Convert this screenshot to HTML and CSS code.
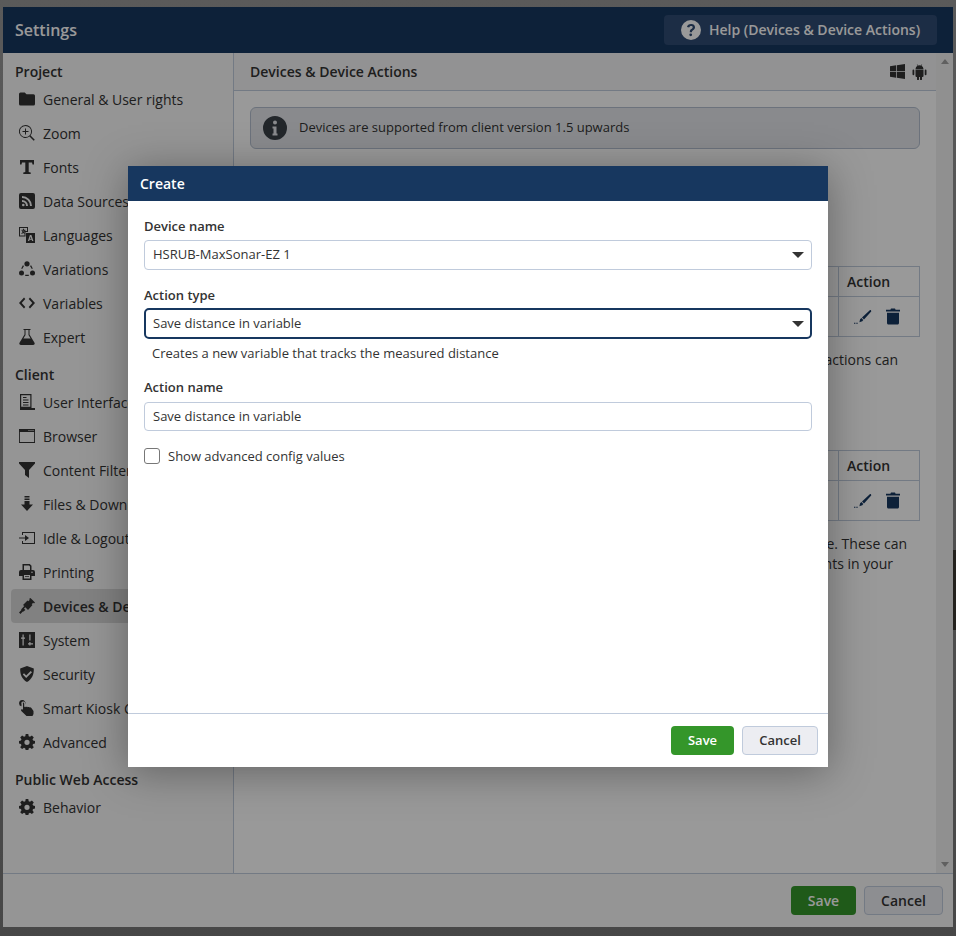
FILE: index.html
```html
<!DOCTYPE html>
<html lang="en">
<head>
<meta charset="utf-8">
<title>Settings</title>
<link rel="stylesheet" href="styles.css">
</head>
<body>
<svg class="defs" width="0" height="0">
  <symbol id="i-folder" viewBox="0 0 16 16"><path d="M1.500 1.500h4.200l1.800 1.800h7A1.500 1.500 0 0 1 16 4.800v8.200a1.500 1.500 0 0 1-1.500 1.500h-13A1.500 1.500 0 0 1 0 13V3a1.500 1.500 0 0 1 1.500-1.500z"/></symbol>
  <symbol id="i-zoom" viewBox="0 0 16 16"><path fill-rule="evenodd" d="M6.500 0a6.500 6.500 0 0 1 5.100 10.500l4.200 4.200-1.100 1.100-4.200-4.200A6.500 6.500 0 1 1 6.500 0zm0 .9a5.600 5.600 0 1 0 0 11.200A5.600 5.600 0 0 0 6.500.9zM6 3.500h1V6h2.500v1H7v2.500H6V7H3.500V6H6z"/></symbol>
  <symbol id="i-font" viewBox="0 0 16 16"><path d="M1 1h14v4.500h-1.500L13 3.500H9.700v9.500l2 .5V15H4.300v-1.500l2-.5V3.500H3l-.5 2H1z"/></symbol>
  <symbol id="i-rss" viewBox="0 0 16 16"><path fill-rule="evenodd" d="M2 0h12a2 2 0 0 1 2 2v12a2 2 0 0 1-2 2H2a2 2 0 0 1-2-2V2a2 2 0 0 1 2-2zm1 3v2a8 8 0 0 1 8 8h2A10 10 0 0 0 3 3zm0 4v2a4 4 0 0 1 4 4h2a6 6 0 0 0-6-6zm1.300 3.700a1.300 1.300 0 1 0 0 2.600 1.300 1.300 0 0 0 0-2.600z"/></symbol>
  <symbol id="i-lang" viewBox="0 0 16 16"><path fill-rule="evenodd" d="M0 0h9v5H6.500v4.500H0zm1 1v7.500h4.500V4H8V1zm3 .8h1v1h1.500v1h-.7a5 5 0 0 1-.9 1.600l.9.700-.6.700-1-.8-1.400 1-.5-.8 1.300-.9a5 5 0 0 1-.7-1.200h1a4 4 0 0 0 .4.600 4 4 0 0 0 .5-1H2.500v-1H4zM7 6h9v10H7zm3.900 2-2 6h1.300l.4-1.200h2.100l.4 1.200h1.300l-2-6zm.7 1.700.7 2h-1.400z"/></symbol>
  <symbol id="i-vari" viewBox="0 0 16 16"><circle cx="8" cy="2.800" r="2.600"/><circle cx="2.500" cy="12" r="2.500"/><circle cx="13.500" cy="12" r="2.500"/><path d="M3.900 4.300 2.200 7.400l1 .5 1.800-3zm8.200 0-1.100.6 1.800 3 1-.5zM6.200 13.800v1.300h3.600v-1.300z"/></symbol>
  <symbol id="i-code" viewBox="0 0 16 16"><path d="M5 2.500 6.300 4 2.700 8l3.600 4L5 13.500 0 8zm6 0L16 8l-5 5.500L9.700 12l3.600-4-3.600-4z"/></symbol>
  <symbol id="i-flask" viewBox="0 0 16 16"><path fill-rule="evenodd" d="M4.500 0h7v1h-1v4.500l5 8.300c.6 1-.1 2.200-1.300 2.200H1.800C.6 16-.1 14.800.5 13.800l5-8.300V1h-1zm2 1v4.900L4.400 9.500h7.200L9.500 5.900V1z"/></symbol>
  <symbol id="i-book" viewBox="0 0 16 16"><path fill-rule="evenodd" d="M1 0h11.500v14H16v2H1zm1.200 1.200v11.600h9.100V1.200zM4 3h3.500v1H4zm0 2.500h5.500v1H4zM4 8h5.500v1H4zm0 2.500h5.500v1H4z"/></symbol>
  <symbol id="i-browser" viewBox="0 0 16 16"><path fill-rule="evenodd" d="M0 1h16v14H0zm.9 3v10.100h14.200V4zM9.500 2v1h1V2zm2 0v1h1V2zm2 0v1h1V2z"/></symbol>
  <symbol id="i-filter" viewBox="0 0 16 16"><path d="M0 0h16v1.500L10 8v8L6 13V8L0 1.500z"/></symbol>
  <symbol id="i-down" viewBox="0 0 16 16"><path d="M5.500 0h5v1.500h-5zm0 2.500h5V4h-5zm0 2.500h5v3.500H14L8 15 2 8.500h3.500z"/></symbol>
  <symbol id="i-logout" viewBox="0 0 16 16"><path fill-rule="evenodd" d="M3 2h13v12H3v-3h1v2h11V3H4v2H3zM0 7.500h6V5l4 3-4 3V8.500H0z"/></symbol>
  <symbol id="i-print" viewBox="0 0 16 16"><path fill-rule="evenodd" d="M3.500 0h7.300l1.700 1.700V6H14a2 2 0 0 1 2 2v4h-3.500v4h-9v-4H0V8a2 2 0 0 1 2-2h1.500zM5 1.500V6h6V2.500l-1-1zM5 11v3.500h6V11zm1 1h4v.8H6zm7-4.500a.8.800 0 1 0 0 1.600.8.800 0 0 0 0-1.600z"/></symbol>
  <symbol id="i-plug" viewBox="0 0 16 16"><path d="M11.500 0 16 4.500 15 5.500l-.8-.8-1.500 1.500.8.800L9 12 6.300 9.300 5 10.600l1.400 1.400-1.900 1.600-1 .1L1.500 16 0 14.500l2.200-2.200.1-1 3-3.200L4 7l4.500-4.500.8.800L10.800 1.800 10 1z"/></symbol>
  <symbol id="i-sys" viewBox="0 0 16 16"><path fill-rule="evenodd" d="M0 0h16v16H0zm3.500 2.500v3H2v1.200h1.500v6.800h1.200V6.700H6V5.500H4.700v-3zm6.800 7.500v1.200H9v1.200h1.300v1.100h1.200v-1.100H14v-1.200h-2.500V10zm0-7.500v6h1.200v-6z"/></symbol>
  <symbol id="i-shield" viewBox="0 0 16 16"><path fill-rule="evenodd" d="M8 0l6.800 2.500c.2 6-1.800 10.800-6.800 13.500C3 13.300 1 8.500 1.200 2.500zm3.700 5L7.200 9.500 5 7.300 3.800 8.500l3.400 3.400L13 6.200z"/></symbol>
  <symbol id="i-hand" viewBox="0 0 16 16"><path fill-rule="evenodd" d="M3.200 0a3.200 3.200 0 0 1 3 4.400V3.400a1.900 1.900 0 1 0-3.700.6v2.300A3.200 3.200 0 0 1 3.200 0zM4 2.500a1.200 1.200 0 0 1 1.200 1.200v3.500c.5-.5 1.300-.5 1.700 0 .5-.5 1.400-.5 1.800.1.500-.4 1.300-.4 1.700.2.700-.4 1.600-.1 2 .6l2.100 3V14l-1 2H7.500L2.300 11c-.8-1 .4-2.300 1.400-1.400l.3.300V3.700A1.200 1.200 0 0 1 4 2.500z"/></symbol>
  <symbol id="i-cog" viewBox="0 0 16 16"><path fill-rule="evenodd" d="M6.700 0h2.600l.4 2.200 1.300.6 1.900-1.300 1.900 1.900-1.300 1.900.6 1.300 1.900.4v2.600l-1.900.4-.6 1.300 1.300 1.900-1.900 1.900-1.900-1.300-1.300.6-.4 2.200H6.700l-.4-2.200-1.300-.6-1.900 1.300-1.900-1.900 1.300-1.900-.6-1.300L0 9.600V7l1.900-.4.600-1.300L1.200 3.400l1.900-1.900 1.900 1.300 1.300-.6zM8 5.700a2.600 2.600 0 1 0 0 5.200 2.600 2.600 0 0 0 0-5.200z"/></symbol>
  <symbol id="i-pen" viewBox="0 0 18 14"><path d="M15.800.2c.7-.4 1.700.6 1.400 1.300L10 9.500 8 7.500zM7.400 8.100l1.900 1.900-1 1.300-2.900 1 .7-3zM0 12.800h1.400v1H0zm2.300 0h1.400v1H2.300z"/></symbol>
  <symbol id="i-trash" viewBox="0 0 14 16"><path fill-rule="evenodd" d="M5 0h4l.6 1.200H14v1.900H0V1.200h4.400zM1 4.200h12v10.300c0 .9-.6 1.500-1.500 1.500h-9C1.600 16 1 15.400 1 14.500z"/></symbol>
</svg>

<div class="window">
  <header class="win-head">
    <h1 class="win-title">Settings</h1>
    <button class="help-btn">
      <svg class="help-icon" viewBox="0 0 20 20"><path fill-rule="evenodd" d="M10 0a10 10 0 1 1 0 20 10 10 0 0 1 0-20zm.2 4C7.800 4 6.300 5 6 7l2.200.6c.2-1 .8-1.600 1.900-1.600 1 0 1.600.5 1.600 1.300 0 .8-.6 1.200-1.400 1.800-1 .7-1.500 1.400-1.500 2.600v.5h2.200v-.3c0-.7.300-1 1.100-1.600 1-.7 1.900-1.500 1.900-3C14 5.200 12.500 4 10.200 4zM9.700 13.400a1.400 1.400 0 1 0 0 2.800 1.400 1.400 0 0 0 0-2.800z"/></svg>
      <span class="help-text">Help (Devices &amp; Device Actions)</span>
    </button>
  </header>

  <div class="win-body">
    <nav class="sidebar">
      <div class="nav-section">Project</div>
      <a class="nav-item"><svg class="nav-icon"><use href="#i-folder"/></svg><span>General &amp; User rights</span></a>
      <a class="nav-item"><svg class="nav-icon"><use href="#i-zoom"/></svg><span>Zoom</span></a>
      <a class="nav-item"><svg class="nav-icon"><use href="#i-font"/></svg><span>Fonts</span></a>
      <a class="nav-item"><svg class="nav-icon"><use href="#i-rss"/></svg><span>Data Sources</span></a>
      <a class="nav-item"><svg class="nav-icon"><use href="#i-lang"/></svg><span>Languages</span></a>
      <a class="nav-item"><svg class="nav-icon"><use href="#i-vari"/></svg><span>Variations</span></a>
      <a class="nav-item"><svg class="nav-icon"><use href="#i-code"/></svg><span>Variables</span></a>
      <a class="nav-item"><svg class="nav-icon"><use href="#i-flask"/></svg><span>Expert</span></a>
      <div class="nav-section">Client</div>
      <a class="nav-item"><svg class="nav-icon"><use href="#i-book"/></svg><span>User Interface</span></a>
      <a class="nav-item"><svg class="nav-icon"><use href="#i-browser"/></svg><span>Browser</span></a>
      <a class="nav-item"><svg class="nav-icon"><use href="#i-filter"/></svg><span>Content Filter</span></a>
      <a class="nav-item"><svg class="nav-icon"><use href="#i-down"/></svg><span>Files &amp; Downloads</span></a>
      <a class="nav-item"><svg class="nav-icon"><use href="#i-logout"/></svg><span>Idle &amp; Logout</span></a>
      <a class="nav-item"><svg class="nav-icon"><use href="#i-print"/></svg><span>Printing</span></a>
      <a class="nav-item active"><svg class="nav-icon"><use href="#i-plug"/></svg><span>Devices &amp; Device Actions</span></a>
      <a class="nav-item"><svg class="nav-icon"><use href="#i-sys"/></svg><span>System</span></a>
      <a class="nav-item"><svg class="nav-icon"><use href="#i-shield"/></svg><span>Security</span></a>
      <a class="nav-item"><svg class="nav-icon"><use href="#i-hand"/></svg><span>Smart Kiosk Control</span></a>
      <a class="nav-item"><svg class="nav-icon"><use href="#i-cog"/></svg><span>Advanced</span></a>
      <div class="nav-section">Public Web Access</div>
      <a class="nav-item"><svg class="nav-icon"><use href="#i-cog"/></svg><span>Behavior</span></a>
    </nav>

    <main class="content">
      <div class="content-title">
        <h2 class="content-h">Devices &amp; Device Actions</h2>
        <div class="os-icons">
          <svg class="os-win" viewBox="0 0 14 14"><path d="M0 2l5.700-.8v5.400H0zm6.400-.9L14 0v6.600H6.400zM0 7.300h5.700v5.500L0 12zm6.400 0H14V14l-7.600-1.100z"/></svg>
          <svg class="os-droid" viewBox="0 0 14 16"><path d="M3 5.500h8V12a1 1 0 0 1-1 1h-.5v2.200a1 1 0 0 1-2 0V13h-1v2.200a1 1 0 0 1-2 0V13H4a1 1 0 0 1-1-1zM.9 5.500a.9.900 0 0 1 .9.900v3.900a.9.900 0 0 1-1.800 0V6.400a.9.900 0 0 1 .9-.9zm12.200 0a.9.900 0 0 1 .9.900v3.900a.9.900 0 0 1-1.800 0V6.400a.9.900 0 0 1 .9-.9zM3 5a4 4 0 0 1 2-3.200L4.300.4l.4-.2.800 1.400a4 4 0 0 1 3 0L9.300.2l.4.2L9 1.800A4 4 0 0 1 11 5z"/></svg>
        </div>
      </div>
      <div class="content-scroll">
        <div class="content-main">
          <div class="info-box">
            <svg class="info-icon" viewBox="0 0 24 24"><path fill-rule="evenodd" d="M12 0a12 12 0 1 1 0 24 12 12 0 0 1 0-24zm0 4.500a2 2 0 1 0 0 4 2 2 0 0 0 0-4zM9.500 10.500v2h1v5h-1v2h5v-2h-1v-7z"/></svg>
            <span class="info-text">Devices are supported from client version 1.5 upwards</span>
          </div>
          <div class="table table-one">
            <div class="t-row t-head"><div class="t-main"></div><div class="t-action"><span>Action</span></div></div>
            <div class="t-row t-data"><div class="t-main"></div><div class="t-action t-icons"><svg class="pen"><use href="#i-pen"/></svg><svg class="trash"><use href="#i-trash"/></svg></div></div>
          </div>
          <p class="para one-line">actions can</p>
          <div class="table table-two">
            <div class="t-row t-head"><div class="t-main"></div><div class="t-action"><span>Action</span></div></div>
            <div class="t-row t-data"><div class="t-main"></div><div class="t-action t-icons"><svg class="pen"><use href="#i-pen"/></svg><svg class="trash"><use href="#i-trash"/></svg></div></div>
          </div>
          <p class="para two-a">e. These can</p>
          <p class="para two-b">nts in your</p>
        </div>
        <div class="scrollbar"><span class="arrow up"></span><span class="arrow down"></span></div>
      </div>
    </main>
  </div>

  <footer class="win-foot">
    <button class="btn btn-save btn-big btn-big-save">Save</button>
    <button class="btn btn-cancel btn-big btn-big-cancel">Cancel</button>
  </footer>
</div>

<div class="edge-strip"></div>
<div class="overlay"></div>

<section class="modal">
  <header class="modal-head">Create</header>
  <div class="modal-body">
    <label class="field-label">Device name</label>
    <div class="select"><span class="val">HSRUB-MaxSonar-EZ 1</span><i class="caret"></i></div>
    <label class="field-label second">Action type</label>
    <div class="select focus"><span class="val">Save distance in variable</span><i class="caret"></i></div>
    <div class="hint">Creates a new variable that tracks the measured distance</div>
    <label class="field-label third">Action name</label>
    <div class="input"><span class="val">Save distance in variable</span></div>
    <label class="check"><span class="box"></span><span>Show advanced config values</span></label>
  </div>
  <footer class="modal-foot">
    <button class="btn btn-save">Save</button>
    <button class="btn btn-cancel">Cancel</button>
  </footer>
</section>
</body>
</html>
```
FILE: styles.css
```css
* { box-sizing: border-box; }
html, body { margin: 0; height: 936px; overflow: hidden; }
body {
  position: relative;
  padding: 7px 3px 9px;
  background: linear-gradient(#969696, #777);
  font-family: "Open Sans", sans-serif;
  font-size: 14px;
  color: #333;
  display: flex;
}
.defs { position: absolute; }
.window { flex: 1; display: flex; flex-direction: column; background: #fff; min-width: 0; }
.win-head {
  height: 46px; flex: none; background: #17375f;
  display: flex; align-items: center; justify-content: space-between;
  padding: 0 16px 0 12px;
}
.win-title { margin: 0; font-size: 16px; font-weight: 600; color: #fff; }
.help-btn {
  height: 30px; width: 273px; border: 0; border-radius: 4px; background: #2f4b73;
  color: #fff; font: 600 14px "Open Sans", sans-serif;
  display: flex; align-items: center; justify-content: center; gap: 8px;
}
.help-text { padding-bottom: 2px; }
.help-icon { width: 20px; height: 20px; fill: #fff; }
.win-body { flex: 1; display: flex; min-height: 0; }
.sidebar { width: 231px; flex: none; border-right: 1px solid #c0cbdc; background: #f8f8f8; padding: 8px 8px 0; }
.nav-section { font-weight: 600; height: 21px; line-height: 22px; padding-left: 4px; }
.nav-item { display: flex; align-items: center; height: 34px; gap: 8px; padding-left: 8px; white-space: nowrap; border-radius: 4px; }
.nav-item + .nav-section { margin-top: 11px; height: 20px; line-height: 20px; }
.nav-item.active { background: #d8d8d8; font-weight: 600; }
.nav-icon { width: 16px; height: 16px; fill: #333; flex: none; }
.content { flex: 1; display: flex; flex-direction: column; min-width: 0; }
.content-title {
  height: 38px; flex: none; display: flex; align-items: center; justify-content: space-between;
  padding: 0 9px 0 16px; border-bottom: 1px solid #c0cbdc; background: #f3f4f6; margin-right: 17px;
}
.content-h { margin: 0 0 1px; font-size: 14px; font-weight: 600; }
.os-icons { display: flex; gap: 7px; align-items: center; }
.os-win { width: 15px; height: 15px; fill: #333; }
.os-droid { width: 15px; height: 16px; fill: #333; }
.content-scroll { flex: 1; display: flex; min-height: 0; margin-top: -38px; }
.content-main { flex: 1; min-width: 0; padding: 54px 16px 0; }
.scrollbar { width: 17px; background: #f1f1f1; flex: none; display: flex; flex-direction: column; justify-content: space-between; padding: 6px 0; align-items: center; }
.arrow { width: 0; height: 0; border-left: 4px solid transparent; border-right: 4px solid transparent; }
.arrow.up { border-bottom: 5px solid #a0a0a0; }
.arrow.down { border-top: 5px solid #a0a0a0; }
.info-box {
  height: 42px; border: 1px solid #b4bfcf; border-radius: 6px; background: #e4e7eb;
  display: flex; align-items: center; gap: 12px; padding-left: 12px; font-size: 13px;
}
.info-text { padding-bottom: 2px; }
.info-icon { width: 24px; height: 24px; fill: #3b4149; }
.table { border: 1px solid #c0cbdc; }
.table-one { margin-top: 117px; }
.table-two { margin-top: 80px; }
.t-row { display: flex; }
.t-head { height: 30px; font-weight: 600; border-bottom: 1px solid #c0cbdc; }
.t-data { height: 39px; }
.t-main { flex: 1; }
.t-action { width: 81px; border-left: 1px solid #c0cbdc; padding-left: 8px; display: flex; align-items: center; }
.t-icons { gap: 14px; padding-left: 15px; }
.pen { width: 18px; height: 14px; fill: #17375f; }
.trash { width: 14px; height: 17px; fill: #17375f; }
.para { margin: 0; text-align: right; white-space: nowrap; line-height: 20px; }
.one-line { margin-top: 13px; padding-right: 22px; height: 20px; }
.two-a { margin-top: 13px; padding-right: 13px; }
.two-b { padding-right: 27px; }
.win-foot {
  height: 54px; flex: none; border-top: 1px solid #c0cbdc; background: #f8f8f8;
  display: flex; align-items: center; justify-content: flex-end; gap: 8px; padding: 0 10px 0 0;
}
.btn { height: 29px; border-radius: 4px; font: 600 13px "Open Sans", sans-serif; padding: 0 0 2px; }
.btn-save { width: 63px; background: #34962a; border: 0; color: #fff; }
.btn-cancel { width: 76px; background: #ecedf2; border: 1px solid #c0cbdc; color: #333; }
.btn-big { font-size: 14px; padding-bottom: 0; }
.btn-big-save { width: 65px; }
.btn-big-cancel { width: 79px; }
.edge-strip { position: absolute; right: 0; top: 550px; width: 3px; height: 80px; background: #3c3a32; }
.overlay { position: absolute; inset: 0; background: rgba(0, 0, 0, .4); }
.modal {
  position: absolute; left: 128px; top: 166px; width: 700px; height: 601px;
  background: #fff; display: flex; flex-direction: column;
  box-shadow: 0 5px 40px rgba(0, 0, 0, .35);
}
.modal-head { height: 35px; flex: none; background: #17375f; color: #fff; font-weight: 600; line-height: 35px; padding-left: 12px; }
.modal-body { flex: 1; padding: 16px 16px 0; font-size: 13px; }
.field-label { display: block; font-weight: 600; height: 18px; line-height: 18px; margin-bottom: 5px; }
.field-label.second { margin-top: 16px; margin-bottom: 4px; }
.field-label.third { margin-top: 16px; margin-bottom: 6px; }
.select, .input {
  height: 30px; border: 1px solid #c0cbdc; border-radius: 4px; padding: 0 8px;
  display: flex; align-items: center; justify-content: space-between;
}
.val { padding-bottom: 2px; }
.input { height: 29px; }
.select.focus { height: 31px; border: 2px solid #17375f; border-radius: 5px; padding: 0 7px; }
.caret { width: 0; height: 0; border-left: 6px solid transparent; border-right: 6px solid transparent; border-top: 6px solid #333; margin-right: -1px; }
.hint { padding-left: 8px; height: 18px; line-height: 18px; margin-top: 5px; }
.check { display: flex; align-items: center; gap: 8px; margin-top: 16px; height: 18px; }
.box { width: 16px; height: 16px; border: 1px solid #777; border-radius: 3px; }
.modal-foot {
  height: 54px; flex: none; border-top: 1px solid #c0cbdc;
  display: flex; align-items: center; justify-content: flex-end; gap: 8px; padding-right: 10px;
}
```
